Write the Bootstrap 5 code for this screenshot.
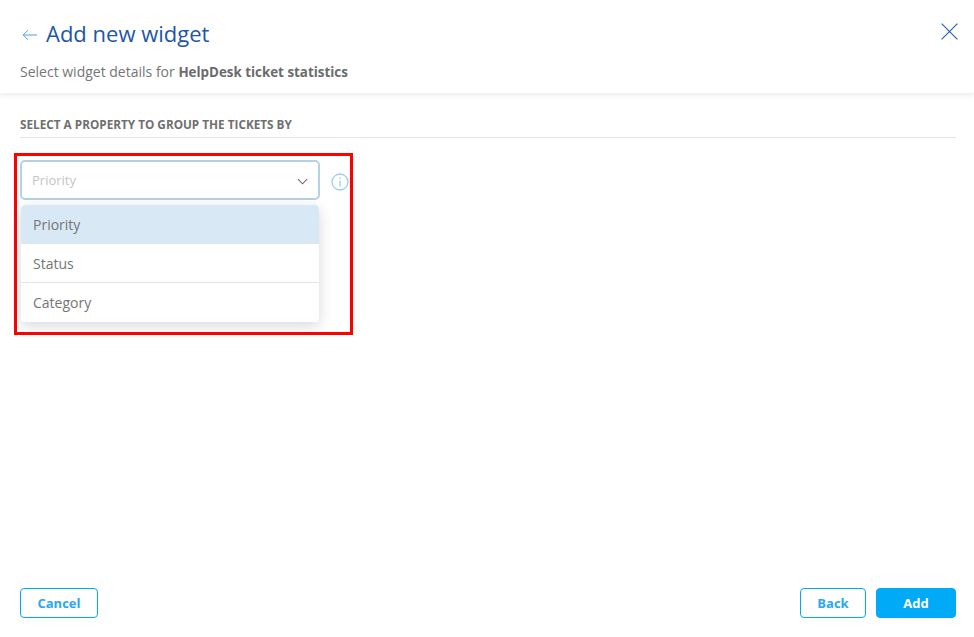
<!DOCTYPE html>
<html lang="en"><head><meta charset="utf-8"><title>Add new widget</title>
<link href="https://cdn.jsdelivr.net/npm/bootstrap@5.3.0/dist/css/bootstrap.min.css" rel="stylesheet">
<style>
html,body{height:100%}
body{font-family:"Open Sans",sans-serif;color:#6f6f6f;background:#fff;overflow:hidden}
.shell{height:637px}
.head{height:94px;padding:17px 16px 0 20px;box-shadow:0 1px 5px rgba(60,80,110,.12);border-bottom:1px solid #f1f3f6}
.ttl{font-size:22px;line-height:32px;font-weight:400;color:#1f56a8;margin:0}
.sub{font-size:14px;line-height:20px;margin-top:13px;color:#757575}
.sub b{font-weight:700;font-size:13.37px;color:#6b6b6b}
.backic{width:16px;height:12px;margin:4px 8px 0 2px;flex:none}
.closeic{width:17px;height:17px;margin-top:6px;flex:none}
.bodyarea{padding:22px 18px 0 20px}
.sect{font-size:11.75px;line-height:17px;font-weight:700;text-transform:uppercase;color:#6f6f6f;padding-bottom:4px;border-bottom:1px solid #e1e7ec}
.mark-box{width:339px;height:182px;margin:15px 0 0 -6px;border:3px solid #f00;padding:4px 0 0 3px;box-sizing:border-box}
.col-sel{width:300px;flex:none}
.fake-sel{height:40px;border:2px solid #b4d2e2;border-radius:5px;padding:0 10px;font-size:13px;color:#c4c4c4;background:#fff}
.fake-sel span{padding-top:1px}
.chev{width:11px;height:7px;margin:2px 0 0}
.menu-list{margin:5px 1px 0;border-radius:4px;box-shadow:0 4px 14px rgba(50,60,80,.2);overflow:hidden;background:#fff}
.menu-list .list-group-item{height:39px;padding:1px 12px 0;border:0;border-bottom:1px solid #dfe7ec;font-size:14px;line-height:38px;color:#757575;background:#fff}
.menu-list .list-group-item:last-child{border-bottom:0}
.menu-list .list-group-item.sel{background:#d9e8f5;height:39px}
.infoic{width:18px;height:18px;margin:13px 0 0 11px;flex:none}
.foot{padding:0 18px 19px 20px}
.bt{height:30px;font-size:13px;font-weight:700;line-height:28px;padding:0;border-radius:4px;border:1px solid #00aaf7}
.bt-o{color:#2aa7f2;background:#fff}
.bt-o:hover{color:#2aa7f2;background:#fff;border-color:#00aaf7}
.bt-f{color:#fff;background:#00aaf7}
.bt-f:hover{color:#fff;background:#00aaf7;border-color:#00aaf7}
.w78{width:78px}.w66{width:66px}.w80{width:80px}
.gap10{gap:10px}
</style></head>
<body>
<div class="shell d-flex flex-column">
  <header class="head">
    <div class="d-flex justify-content-between align-items-start">
      <div class="d-flex align-items-center">
        <svg class="backic" viewBox="0 0 16 12" fill="none" stroke="#4aa3e8" stroke-width="1"><path d="M15 6H1.2M6 1.2 1.2 6 6 10.8"/></svg>
        <h1 class="ttl">Add new widget</h1>
      </div>
      <svg class="closeic" viewBox="0 0 17 17" fill="none" stroke="#2a62b8" stroke-width="1.2"><path d="M.6.6l15.8 15.8M16.4.6.6 16.4"/></svg>
    </div>
    <div class="sub">Select widget details for <b>HelpDesk ticket statistics</b></div>
  </header>
  <main class="bodyarea flex-grow-1">
    <div class="sect">Select a property to group the tickets by</div>
    <div class="mark-box d-flex align-items-start">
      <div class="col-sel">
        <div class="fake-sel d-flex align-items-center justify-content-between">
          <span>Priority</span>
          <svg class="chev" viewBox="0 0 12 7" fill="none" stroke="#666" stroke-width="1.1"><path d="M1 1l5 5 5-5"/></svg>
        </div>
        <div class="list-group menu-list">
          <div class="list-group-item sel">Priority</div>
          <div class="list-group-item">Status</div>
          <div class="list-group-item">Category</div>
        </div>
      </div>
      <svg class="infoic" viewBox="0 0 18 18" fill="none" stroke="#9ccbf0" stroke-width="1.3"><circle cx="9" cy="9" r="8"/><path d="M9 7.5v6"/><path d="M9 4.4v1.6"/></svg>
    </div>
  </main>
  <footer class="foot d-flex justify-content-between">
    <button class="btn bt bt-o w78">Cancel</button>
    <div class="d-flex gap10">
      <button class="btn bt bt-o w66">Back</button>
      <button class="btn bt bt-f w80">Add</button>
    </div>
  </footer>
</div>
<script src="https://cdn.jsdelivr.net/npm/bootstrap@5.3.0/dist/js/bootstrap.bundle.min.js"></script>
</body></html>
